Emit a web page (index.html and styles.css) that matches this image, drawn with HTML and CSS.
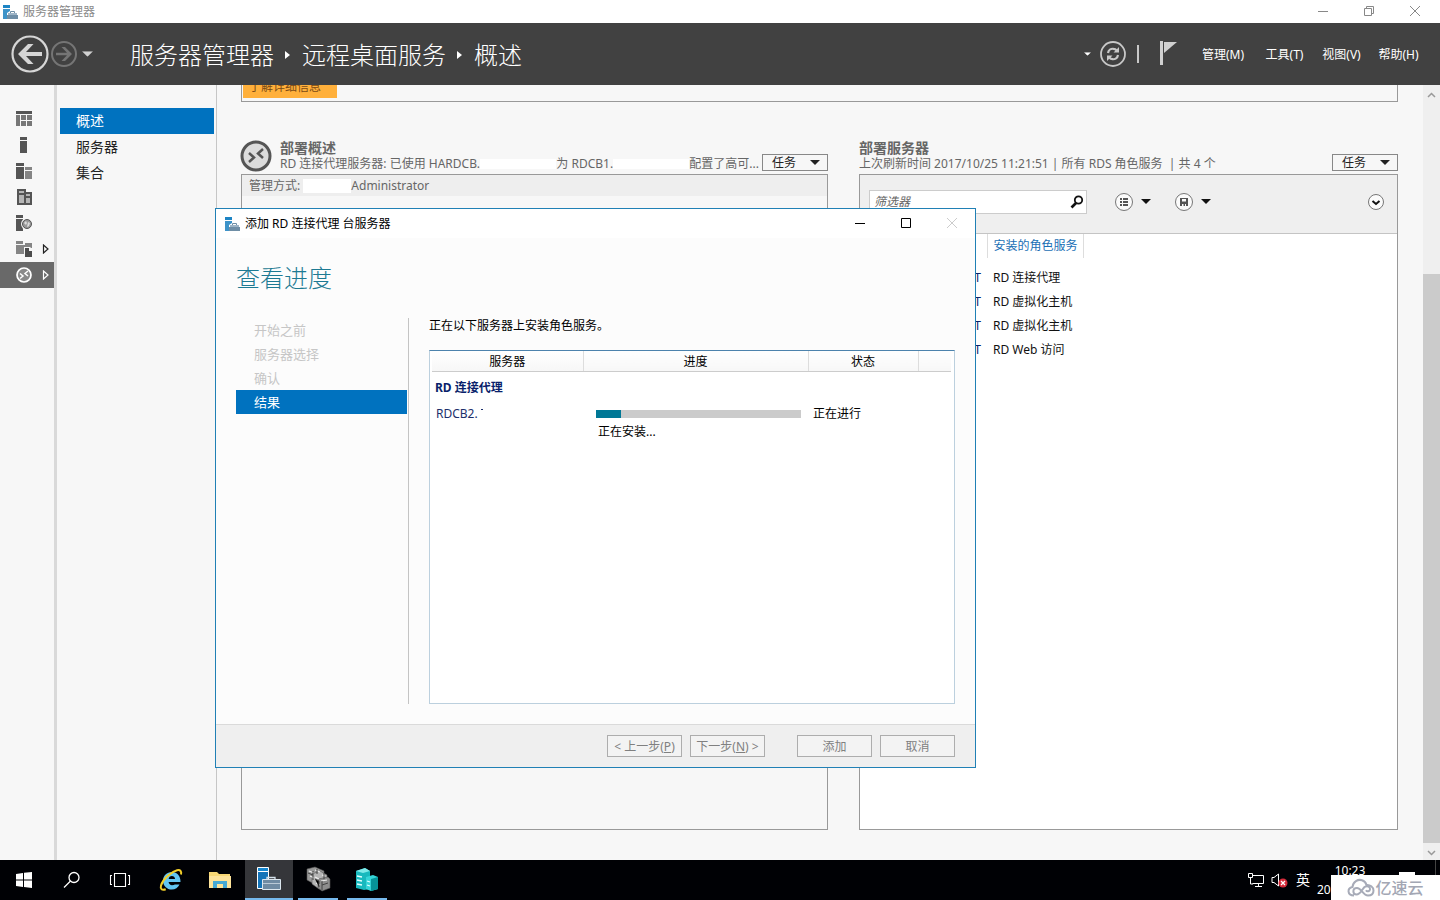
FILE: index.html
```html
<!DOCTYPE html>
<html lang="zh-CN">
<head>
<meta charset="utf-8">
<title>服务器管理器</title>
<link rel="stylesheet" href="styles.css">
</head>
<body>
<svg class="defs" width="0" height="0" aria-hidden="true">
  <symbol id="app" viewBox="0 0 16 16">
    <path d="M1 1h7v3H1z" fill="#1d84c4"/><path d="M1 5h7v2L5 9v6H1z" fill="#3d93c9"/>
    <path d="M8.500 9V7.500h4V9" fill="none" stroke="#6f8ea6"/><path d="M6 9h9v2H6z" fill="#9db4c6"/><path d="M5 11h11v4H5z" fill="#6f8ea6"/>
  </symbol>
  <symbol id="caret" viewBox="0 0 10 5"><path d="M0 0h10L5 5z" fill="currentColor"/></symbol>
  <symbol id="tri" viewBox="0 0 8 10"><path d="M1.500 1v8L6 5z" fill="none" stroke="currentColor" stroke-width="1.200"/></symbol>
</svg>

<header class="titlebar">
  <svg width="16" height="16"><use href="#app"/></svg>
  <span class="titlebar-text">服务器管理器</span>
  <div class="win-buttons">
    <button aria-label="最小化"><svg width="12" height="12"><path d="M1 5.500h10" stroke="#888"/></svg></button>
    <button aria-label="还原"><svg width="12" height="12"><path d="M1.500 2.500h7v7h-7zM3.500 2.500v-2h7v7h-2" fill="none" stroke="#888"/></svg></button>
    <button aria-label="关闭"><svg width="12" height="12"><path d="M1 0l10 10M11 0L1 10" stroke="#888"/></svg></button>
  </div>
</header>

<div class="header">
  <button class="nav-back" aria-label="后退"><svg width="38" height="38"><circle cx="19" cy="19" r="17.500" fill="none" stroke="#d6d6d6" stroke-width="2.200"/><path d="M7 19l10-10h5.500l-7.500 8H31v4H15l7.500 8H17z" fill="#d6d6d6"/></svg></button>
  <button class="nav-fwd" aria-label="前进"><svg width="28" height="28"><circle cx="14" cy="14" r="12" fill="none" stroke="#757575" stroke-width="2"/><path d="M22 14l-7-7h-3.500l5.500 5.700H6v2.600h11L11.500 21H15z" fill="#757575"/></svg></button>
  <button class="nav-drop" aria-label="历史记录"><svg width="11" height="6" viewBox="0 0 10 5"><use href="#caret"/></svg></button>
  <nav class="crumbs">
    <span>服务器管理器</span><svg width="6" height="10"><path d="M0 1l5 4-5 4z" fill="#fff"/></svg>
    <span>远程桌面服务</span><svg width="6" height="10"><path d="M0 1l5 4-5 4z" fill="#fff"/></svg>
    <span>概述</span>
  </nav>
  <div class="header-tools">
    <button aria-label="更多"><svg width="7" height="4" viewBox="0 0 10 5"><use href="#caret"/></svg></button>
    <button class="refresh" aria-label="刷新"><svg width="28" height="28"><circle cx="14" cy="14" r="12" fill="none" stroke="#c8c8c8" stroke-width="1.800"/><path d="M9 13c.5-3 3-4.500 5.500-4.200 1.300.1 2.300.6 3 1.400M19 15c-.5 3-3 4.500-5.500 4.200-1.300-.1-2.300-.6-3-1.400" fill="none" stroke="#c8c8c8" stroke-width="2.200"/><path d="M20 7v5.500h-5.500zM8 21v-5.500h5.500z" fill="#c8c8c8"/></svg></button>
    <i class="bar"></i>
    <button class="flag" aria-label="通知"><svg width="18" height="26"><path d="M1 0h3v24H1z" fill="#d0d0d0"/><path d="M5 1h13L5 12z" fill="#d0d0d0"/></svg></button>
  </div>
  <nav class="menu">
    <button>管理(M)</button><button>工具(T)</button><button>视图(V)</button><button>帮助(H)</button>
  </nav>
</div>

<main class="main">
  <nav class="rail" aria-label="导航">
    <button aria-label="仪表板"><svg width="18" height="16"><path d="M1 0h16v3H1z" fill="#555"/><path d="M1 4h4v11H1zM6 4h5v5H6zM12 4h5v5h-5zM6 10h5v5H6zM12 10h5v5h-5z" fill="#777"/></svg></button>
    <button aria-label="本地服务器"><svg width="18" height="16"><path d="M5 0h7v3H5zM5 4h7v12H5z" fill="#555"/></svg></button>
    <button aria-label="所有服务器"><svg width="18" height="16"><path d="M1 0h8v3H1zM1 4h8v12H1z" fill="#555"/><path d="M10 4h7v3h-7zM10 8h7v8h-7z" fill="#858585"/></svg></button>
    <button aria-label="AD CS"><svg width="18" height="16"><path d="M2 0h9v3h6v13H2z" fill="#555"/><path d="M4 2h5v2H4zM4 6h5v8H4zM11 5h4v2h-4zM11 9h4v5h-4z" fill="#b5b5b5"/></svg></button>
    <button aria-label="AD DS"><svg width="18" height="16"><path d="M1 0h7v3H1zM1 4h7v12H1z" fill="#555"/><circle cx="12" cy="9" r="6" fill="#f7f7f7"/><circle cx="12" cy="9" r="4.500" fill="#999" stroke="#555"/><path d="M9 8l2-2 1 2-1 2zM13 7l2 1-1 3-2 1z" fill="#ddd"/></svg></button>
    <button aria-label="文件和存储服务"><svg width="18" height="16"><path d="M1 0h7v3H1zM1 4h15v9H1zM10 2h7v5h-7z" fill="#858585"/><path d="M9 6h6l3 3v7H9z" fill="#f7f7f7"/><path d="M10 7h4v3h3v6h-7z" fill="#4c4c4c"/></svg><svg class="tri" width="8" height="10"><use href="#tri"/></svg></button>
    <button class="on" aria-label="远程桌面服务"><svg width="18" height="16"><circle cx="9" cy="8" r="7" fill="#8a8a8a" stroke="#fff" stroke-width="1.700"/><path d="M5 6.500l3 2.500-3 2.500M13 4L10 6.500l3 2.500" fill="none" stroke="#fff" stroke-width="1.500"/></svg><svg class="tri" width="8" height="10"><use href="#tri"/></svg></button>
  </nav>
  <nav class="side">
    <a class="on" href="#overview">概述</a><a href="#servers">服务器</a><a href="#sets">集合</a>
  </nav>

  <div class="content" id="overview">
    <div class="banner"><button>了解详细信息</button></div>
    <div class="panels">
      <section class="tile">
        <header class="tile-head">
          <svg class="rds" width="32" height="32"><circle cx="16" cy="16" r="14" fill="#dcdcdc" stroke="#555" stroke-width="3"/><path d="M9 13l5 4.500L9 22M23 9l-5 4.500 5 4.500" fill="none" stroke="#555" stroke-width="2.500"/></svg>
          <div class="tile-text">
            <h2>部署概述</h2>
            <p>RD 连接代理服务器: 已使用 HARDCB.<i class="blank"></i>为 RDCB1.<i class="blank"></i>配置了高可...</p>
          </div>
          <button class="tasks">任务<svg width="10" height="5"><use href="#caret"/></svg></button>
        </header>
        <div class="box">
          <div class="managed">管理方式: <i class="blank short"></i>Administrator</div>
        </div>
      </section>
      <section class="tile" id="servers">
        <header class="tile-head">
          <div class="tile-text">
            <h2>部署服务器</h2>
            <p>上次刷新时间 2017/10/25 11:21:51 | 所有 RDS 角色服务&nbsp; | 共 4 个</p>
          </div>
          <button class="tasks">任务<svg width="10" height="5"><use href="#caret"/></svg></button>
        </header>
        <div class="box white">
          <div class="filter">
            <label class="search"><input type="text" placeholder="筛选器" aria-label="筛选器"><svg width="14" height="14"><circle cx="8.500" cy="5" r="3.700" fill="none" stroke="#111" stroke-width="1.800"/><path d="M6 8l-4.500 4.500" stroke="#111" stroke-width="2.600"/></svg></label>
            <button aria-label="列表"><svg width="20" height="20"><circle cx="10" cy="10" r="8.500" fill="#fbfbfb" stroke="#777"/><path d="M6 6h2v2H6zM9 6h5v2H9zM6 9h2v2H6zM9 9h5v2H9zM6 12h2v2H6zM9 12h5v2H9z" fill="#555"/></svg><svg width="10" height="5"><use href="#caret"/></svg></button>
            <button aria-label="保存"><svg width="20" height="20"><circle cx="10" cy="10" r="8.500" fill="#fbfbfb" stroke="#777"/><path d="M6 6h8v8H6z" fill="#555"/><path d="M8 7h4v2.500H8zM8 12h1.500v2H8zM11 12h1v2h-1z" fill="#fbfbfb"/></svg><svg width="10" height="5"><use href="#caret"/></svg></button>
            <button class="expand" aria-label="展开"><svg width="18" height="18"><circle cx="9" cy="9" r="7.500" fill="#fbfbfb" stroke="#777"/><path d="M5.500 8L9 11l3.500-3" fill="none" stroke="#111" stroke-width="2"/></svg></button>
          </div>
          <table class="servers">
            <thead><tr><th></th><th>安装的角色服务</th><th></th></tr></thead>
            <tbody>
              <tr><td>T</td><td>RD 连接代理</td><td></td></tr>
              <tr><td>T</td><td>RD 虚拟化主机</td><td></td></tr>
              <tr><td>T</td><td>RD 虚拟化主机</td><td></td></tr>
              <tr><td>T</td><td>RD Web 访问</td><td></td></tr>
            </tbody>
          </table>
        </div>
      </section>
    </div>
  </div>
  <div class="scroll">
    <button aria-label="向上"><svg width="9" height="6"><path d="M1 5l3.500-3.500L8 5" fill="none" stroke="#999" stroke-width="1.500"/></svg></button>
    <div class="thumb"></div>
    <button aria-label="向下"><svg width="9" height="6"><path d="M1 1l3.500 3.500L8 1" fill="none" stroke="#999" stroke-width="1.500"/></svg></button>
  </div>
</main>

<section class="dialog" role="dialog" aria-label="添加 RD 连接代理 台服务器">
  <header class="dlg-title">
    <svg width="16" height="16"><use href="#app"/></svg>
    <span>添加 RD 连接代理 台服务器</span>
    <div class="win-buttons">
      <button aria-label="最小化"><svg width="12" height="12"><path d="M1 5.500h10" stroke="#000"/></svg></button>
      <button aria-label="最大化"><svg width="12" height="12"><path d="M1.500 .5h9v9h-9z" fill="none" stroke="#000"/></svg></button>
      <button aria-label="关闭" disabled><svg width="12" height="12"><path d="M1 0l10 10M11 0L1 10" stroke="#ccc"/></svg></button>
    </div>
  </header>
  <div class="dlg-body">
    <h1>查看进度</h1>
    <div class="dlg-cols">
      <ol class="steps"><li>开始之前</li><li>服务器选择</li><li>确认</li><li class="on">结果</li></ol>
      <div class="result">
        <p>正在以下服务器上安装角色服务。</p>
        <div class="grid">
          <table class="progress">
            <thead><tr><th>服务器</th><th>进度</th><th>状态</th><th></th></tr></thead>
            <tbody>
              <tr class="group"><td colspan="4">RD 连接代理</td></tr>
              <tr><td class="name">RDCB2.<i class="speck"></i></td><td><div class="meter"><div class="fill" style="width:12%"></div></div><div class="note">正在安装...</div></td><td class="state">正在进行</td><td></td></tr>
            </tbody>
          </table>
        </div>
      </div>
    </div>
  </div>
  <footer class="dlg-foot">
    <button disabled>&lt; 上一步(<u>P</u>)</button><button disabled>下一步(<u>N</u>) &gt;</button>
    <button class="apart" disabled>添加</button><button disabled>取消</button>
  </footer>
</section>

<footer class="taskbar">
  <button aria-label="开始"><svg width="18" height="18"><path d="M1 3l7-1v6.500H1zM9 1.800L17 1v7.500H9zM1 9.500h7V16l-7-1zM9 9.500h8V17l-8-1z" fill="#fff"/></svg></button>
  <button aria-label="搜索"><svg width="18" height="18"><circle cx="11" cy="6.500" r="5" fill="none" stroke="#fff" stroke-width="1.300"/><path d="M7.500 10L1 16.500" stroke="#fff" stroke-width="1.300"/></svg></button>
  <button aria-label="任务视图"><svg width="22" height="16"><path d="M5.500 1.500h11v13h-11zM3 3.500H1.500v9H3M19 3.500h1.500v9H19" fill="none" stroke="#fff" stroke-width="1.100"/></svg></button>
  <div class="apps">
    <button aria-label="Internet Explorer"><svg width="24" height="24"><path d="M20.500 16.500c-1.300 3-4.300 5-7.700 5-4.900 0-8.800-3.800-8.800-8.800S7.900 4 12.800 4c5.200 0 9 4 8.700 10H9.600c.2 2 1.600 3.200 3.400 3.200 1.300 0 2.300-.2 2.900-.7z" fill="#62c6f2"/><path d="M9.700 11h6.400c-.2-2-1.500-3-3.200-3s-3 1.100-3.200 3z" fill="#000105"/><path d="M22 6.500c.8-3-.6-5-4-4.200C12 4 4 11 2 17.500c-1 3.500 1 5.200 4.700 3.700" fill="none" stroke="#f2cf2a" stroke-width="2"/></svg></button>
    <button aria-label="文件资源管理器"><svg width="24" height="20"><path d="M1 2h8l2 2h11v14H1z" fill="#f7d774"/><path d="M1 6h22v12H1z" fill="#fde39a"/><path d="M5 18v-7h14v7h-4v-4H9v4z" fill="#45a9d6"/></svg></button>
    <button class="open now" aria-label="服务器管理器"><svg width="26" height="26"><path d="M1.500 1.500h11v4h-11z" fill="#1687cf" stroke="#fff"/><path d="M1.500 5.500h11v17h-11z" fill="#1474b8" stroke="#fff"/><path d="M11 14v-2.500h8V14" fill="none" stroke="#d5e2ec" stroke-width="1.300"/><path d="M6.500 13.500h18v10h-18z" fill="#6f8ba3" stroke="#dbe6ee"/><path d="M7 17.500h17" stroke="#b9c9d6"/></svg></button>
    <button class="open" aria-label="服务器"><svg width="26" height="26"><g stroke="#555" stroke-width=".6"><path d="M2 3l8-2 9 4v11l-8 3-9-5z" fill="#999"/><path d="M7 8l8-3 7 4v11l-8 3-7-5z" fill="#b5b5b5"/><path d="M13 13l10-2 2 2v9l-8 3-4-3z" fill="#8d8d8d"/></g><path d="M4 5l5 2M10 4l5 2M5 10l4 2M10 11l4 2M17 9l3 1M11 17l4 2M16 15l6-1" stroke="#eee" stroke-width="1.200"/><path d="M3 7l5 2M8 5v9M10 13l4 2v6M17 19l6-2M17 15v9M12 3v5M19 7v6" stroke="#444"/></svg></button>
    <button class="open" aria-label="故障转移群集"><svg width="26" height="26"><path d="M2 5l9-3 5 3v18l-6 1-8-2z" fill="#18b9be"/><path d="M2 5l9-3 5 3-7 2z" fill="#7feaea"/><path d="M12 11l7-2 5 2v12l-7 2-5-2z" fill="#35d5d8"/><path d="M17 13l7-2v12l-7 2z" fill="#079398"/><path d="M3 10l5 1M3 14l5 1M3 18l5 1M13 15l3 1M13 19l3 1" stroke="#e0ffff" stroke-width="1.300"/></svg></button>
  </div>
  <div class="tray">
    <svg width="17" height="16"><path d="M5.500 3.500h11v8h-11M8 14.500h7M11.500 12v2M1.500 1.500h4v4h-4zM3.500 6v6H6" fill="none" stroke="#fff"/></svg>
    <svg width="18" height="16"><path d="M1 5.500h2L7.500 2v12L3 10.500H1z" fill="none" stroke="#fff"/><circle cx="12" cy="11" r="4.500" fill="#d52b3b"/><path d="M10 9l4 4M14 9l-4 4" stroke="#fff" stroke-width="1.300"/></svg>
    <span class="ime">英</span>
    <div class="clock"><span class="time">10:23</span><span>20</span></div>
    <i class="desktop"></i>
  </div>
  <div class="mark">
    <svg width="28" height="20"><path d="M7 17.500c-7 0-7-7.500-1.500-8.500C6 3.500 11 1 15 2.200c2.500.7 4 2.800 4.500 4.800 3.500-.5 7 2 7 5.500s-2.500 5-5.500 5c-5 0-6.500-7.500-11-7.500-5 0-4.500 6.500-.5 6.500 4 0 5-4.500 8-7.500 3-2 6 0 5.500 2.500-.4 2-3 2.500-4 .7" fill="none" stroke="#a7abb8" stroke-width="2"/></svg>
    <span>亿速云</span>
  </div>
</footer>
</body>
</html>
```
FILE: styles.css
```css
* { box-sizing: border-box; }
body {
  margin: 0;
  height: 100vh;
  display: flex;
  flex-direction: column;
  position: relative;
  overflow: hidden;
  background: #f7f7f7;
  color: #111;
  font: 12px/16px "Noto Sans", "Noto Sans CJK SC", sans-serif;
}
button {
  margin: 0;
  padding: 0;
  border: 0;
  background: none;
  font: inherit;
  color: inherit;
  display: flex;
  align-items: center;
  justify-content: center;
}
h1, h2, p, ol { margin: 0; padding: 0; font-weight: 400; }
ol { list-style: none; }
a { color: inherit; text-decoration: none; }
svg { display: block; flex: none; }
table { border-collapse: collapse; table-layout: fixed; width: 100%; }
th, td { padding: 0; font-weight: 400; text-align: left; }
.defs { position: absolute; }

.titlebar { height: 23px; flex: none; display: flex; align-items: center; gap: 5px; padding-left: 2px; background: #fff; color: #8a8a8a; }
.win-buttons { margin-left: auto; display: flex; }
.win-buttons button { width: 46px; height: 22px; }
.titlebar .win-buttons { padding-right: 2px; }

.header { height: 62px; flex: none; display: flex; align-items: center; padding: 0 21px 0 11px; background: #414141; color: #fff; }
.nav-fwd { margin-left: 1px; }
.nav-drop { margin-left: 4px; color: #d0d0d0; }
.crumbs { margin-left: 37px; padding-top: 1px; display: flex; align-items: center; gap: 11px; font-size: 24px; line-height: 32px; font-weight: 300; }
.header-tools { margin-left: auto; display: flex; align-items: center; }
.refresh { margin-left: 8px; }
.bar { width: 2px; height: 18px; margin: 0 20px 0 10px; background: #c8c8c8; }
.menu { display: flex; gap: 16px; margin-left: 25px; padding-top: 2px; }
.menu button:first-child { margin-right: 4px; }
.menu button { min-width: 41px; }

.main { flex: 1; min-height: 0; display: flex; }
.rail { width: 57px; flex: none; padding-top: 21px; border-right: 3px solid #d9d9d9; }
.rail button { width: 100%; height: 26px; padding-left: 15px; justify-content: flex-start; color: #222; }
.rail .tri { margin-left: 9px; }
.rail .on { background: #696969; color: #fff; }
.side { width: 160px; flex: none; padding: 23px 2px 0 3px; border-right: 1px solid #c6c6c6; font-size: 14px; line-height: 26px; color: #222; }
.side a { display: block; padding-left: 16px; }
.side .on { background: #0072bf; color: #fff; }

.content { flex: 1; min-width: 0; display: flex; flex-direction: column; padding: 0 25px 30px 24px; }
.banner { height: 17px; flex: none; display: flex; align-items: flex-end; padding: 0 1px 3px; border: 1px solid #999; border-top: 0; overflow: hidden; }
.banner button { height: 24px; padding: 2px 16px 0 6px; background: #ffb03b; color: #7b4a14; }
.panels { flex: 1; display: grid; grid-template-columns: 587fr 539fr; gap: 31px; padding-top: 38px; }
.tile { display: flex; flex-direction: column; min-width: 0; }
.tile-head { height: 34px; display: flex; align-items: flex-end; gap: 3px; color: #666; }
.rds { align-self: flex-start; margin: 0 5px 0 -1px; }
.tile-text { flex: 1; min-width: 0; padding-bottom: 2px; white-space: nowrap; }
.tile-text h2 { font-size: 14px; font-weight: 700; line-height: 16px; }
.tile-text p { display: flex; align-items: center; line-height: 16px; white-space: pre; }
.blank { flex: 1; height: 10px; background: #fff; }
.blank.short { flex: none; width: 48px; height: 14px; }
.tasks { width: 66px; height: 17px; margin-bottom: 3px; gap: 14px; padding-left: 2px; border: 1px solid #888; color: #222; }
.box { flex: 1; border: 1px solid #999; }
.box.white { background: #fff; }
.managed { height: 21px; display: flex; align-items: center; padding-left: 7px; background: #eee; color: #666; white-space: pre; }

.filter { height: 59px; display: flex; align-items: center; padding: 0 12px 5px 9px; background: #efefef; border-bottom: 1px solid #c4c4c4; }
.filter button { gap: 7px; color: #111; margin-right: 23px; }
.filter .expand { margin: 0 0 0 auto; }
.search { width: 218px; height: 24px; display: flex; align-items: center; margin-right: 27px; padding: 0 2px 0 4px; background: #fff; border: 1px solid #ccc; }
.search input { flex: 1; min-width: 0; padding: 0; border: 0; outline: 0; background: none; font: inherit; font-style: italic; }
.search input::placeholder { color: #666; opacity: 1; }
.servers th { height: 24px; color: #1a6fb5; }
.servers th:nth-child(1) { width: 127px; }
.servers th:nth-child(2) { width: 96px; padding-left: 6px; border: 1px solid #ddd; border-width: 0 1px; }
.servers td { height: 24px; white-space: nowrap; }
.servers td:first-child { text-align: right; padding-right: 6px; color: #0a246a; }
.servers td:nth-child(2) { padding-left: 6px; }
.servers tbody::before { content: ""; display: block; height: 8px; }

.scroll { width: 17px; flex: none; display: flex; flex-direction: column; background: #efefef; }
.scroll button { height: 17px; padding-top: 3px; }
.thumb { flex: 1; margin-top: 172px; background: #cbcbcb; }

.dialog { position: absolute; left: 215px; top: 208px; width: 761px; height: 560px; display: flex; flex-direction: column; background: #fcfcfc; border: 1px solid #2080b5; }
.dlg-title { height: 29px; flex: none; display: flex; align-items: center; gap: 5px; padding-left: 8px; background: #fff; color: #000; }
.dlg-body { flex: 1; display: flex; flex-direction: column; padding: 24px 20px 20px; }
.dlg-body h1 { font-size: 24px; line-height: 32px; font-weight: 300; color: #1d7a93; }
.dlg-cols { flex: 1; display: flex; margin-top: 24px; }
.steps { width: 173px; flex: none; padding-right: 1px; border-right: 1px solid #c4c4c4; font-size: 13px; line-height: 24px; color: #c6c6c6; }
.steps li { padding-left: 18px; }
.steps .on { background: #0072bf; color: #fff; }
.result { flex: 1; display: flex; flex-direction: column; margin-left: 20px; color: #000; }
.grid { flex: 1; margin-top: 16px; padding: 0 3px 0 2px; background: #fff; border: 1px solid #bcd0de; border-top-color: #4d83ad; }
.progress th { height: 20px; padding-top: 2px; text-align: center; background: linear-gradient(#fff, #f7f7f7); border-right: 1px solid #ddd; border-bottom: 1px solid #ccc; }
.progress th:nth-child(1) { width: 151px; }
.progress th:nth-child(2) { width: 225px; }
.progress th:nth-child(3) { width: 110px; }
.progress th:last-child { border-right: 0; }
.progress td { vertical-align: top; }
.group td { height: 34px; padding: 8px 0 0 3px; font-weight: 700; color: #0a1f6b; }
.name { color: #1c2f6b; padding-left: 4px; }
.speck { display: inline-block; width: 2px; height: 1px; margin-left: 3px; vertical-align: 8px; background: #1c2f6b; }
.meter { height: 8px; margin: 5px 7px 0 13px; background: #cbcbcb; }
.fill { height: 100%; background: #007896; }
.note { margin: 6px 0 0 15px; }
.progress .state, .progress .name { padding-top: 1px; }
.state { padding-left: 5px; }
.dlg-foot { height: 43px; flex: none; display: flex; align-items: center; justify-content: flex-end; gap: 8px; padding-right: 20px; background: #efefef; border-top: 1px solid #dadada; }
.dlg-foot button { width: 75px; height: 22px; padding-top: 2px; background: #f3f3f3; border: 1px solid #adadad; color: #808080; white-space: pre; }
.dlg-foot .apart { margin-left: 24px; }

.taskbar { height: 40px; flex: none; display: flex; position: relative; background: #000105; color: #fff; }
.taskbar button { width: 48px; height: 40px; }
.apps { display: flex; gap: 1px; margin-left: 3px; }
.apps .open { width: 40px; margin: 0 4px; border-bottom: 2px solid #76b9ed; }
.apps .now { width: 48px; margin: 0; background: #35363a; }
.tray { margin-left: auto; display: flex; align-items: center; gap: 7px; padding-right: 4px; }
.ime { font-size: 14px; }
.clock { width: 66px; margin-right: 45px; }
.clock span { display: block; line-height: 19px; }
.clock .time { text-align: center; }
.desktop { align-self: stretch; width: 1px; background: #444; }
.mark { position: absolute; right: 0; bottom: 0; width: 109px; height: 25px; display: flex; align-items: center; justify-content: center; background: #fff; color: #a3a7b4; font-size: 16px; font-weight: 500; }
.mark::before { content: ""; position: absolute; right: 25px; top: -3px; width: 16px; height: 3px; background: #fff; }
```
